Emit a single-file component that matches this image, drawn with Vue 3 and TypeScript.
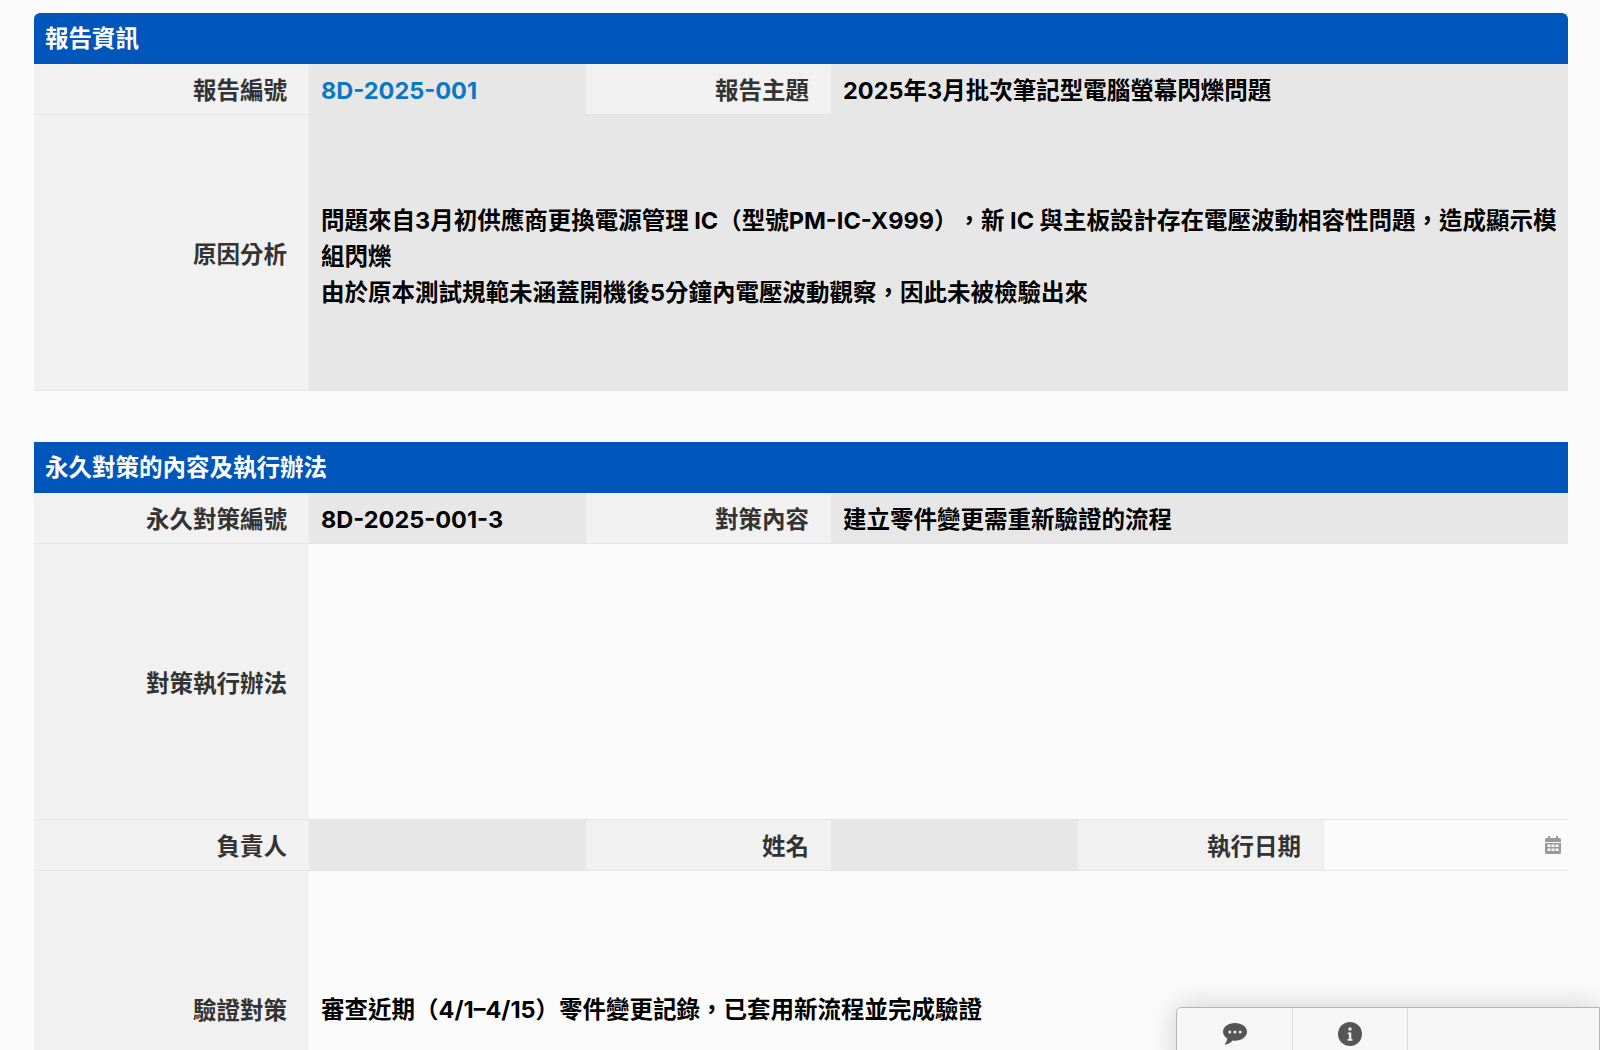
<script setup lang="ts">
interface Cell { label: string; value?: string; kind?: string; span: number; date?: boolean }
const first: Cell[] = [
  { label: '報告編號', value: '8D-2025-001', kind: 'filled link', span: 1 },
  { label: '報告主題', value: '2025年3月批次筆記型電腦螢幕閃爍問題', kind: 'filled', span: 3 },
]
</script>

<template>
  <main class="page">
    <section class="card">
      <h2 class="head round">報告資訊</h2>
      <div class="grid">
        <template v-for="c in first" :key="c.label">
          <div class="label short">{{ c.label }}</div>
          <div class="value short" :class="c.kind" :style="{ gridColumn: 'span ' + (c.span === 3 ? 3 : 1) }">{{ c.value }}</div>
        </template>
        <div class="label tall">原因分析</div>
        <div class="value tall filled wide">
          <p>問題來自3月初供應商更換電源管理 IC（型號PM-IC-X999），新 IC 與主板設計存在電壓波動相容性問題，造成顯示模組閃爍<br />由於原本測試規範未涵蓋開機後5分鐘內電壓波動觀察，因此未被檢驗出來</p>
        </div>
      </div>
    </section>

    <section class="card second">
      <h2 class="head">永久對策的內容及執行辦法</h2>
      <div class="grid">
        <div class="label short">永久對策編號</div>
        <div class="value short filled">8D-2025-001-3</div>
        <div class="label short">對策內容</div>
        <div class="value short filled span3">建立零件變更需重新驗證的流程</div>
        <div class="label tall">對策執行辦法</div>
        <div class="value tall wide"></div>
        <div class="label short">負責人</div>
        <div class="value short filled"></div>
        <div class="label short">姓名</div>
        <div class="value short filled"></div>
        <div class="label short">執行日期</div>
        <div class="value short date">
          <svg class="cal" viewBox="0 0 16 18" width="16" height="18" aria-hidden="true">
            <path fill="#999" d="M3 0h2v2h6V0h2v2h1.500A1.500 1.500 0 0 1 16 3.500V6H0V3.500A1.500 1.500 0 0 1 1.500 2H3zM0 7h16v9.500a1.500 1.500 0 0 1-1.500 1.500h-13A1.500 1.500 0 0 1 0 16.500z"/>
            <path fill="#fbfbfb" d="M2.500 8.500h3v2.500h-3zM6.500 8.500h3v2.500h-3zM10.500 8.500h3v2.500h-3zM2.500 12.500h3V15h-3zM6.500 12.500h3V15h-3zM10.500 12.500h3V15h-3z"/>
          </svg>
        </div>
        <div class="label tall">驗證對策</div>
        <div class="value tall wide">審查近期（4/1–4/15）零件變更記錄，已套用新流程並完成驗證</div>
      </div>
    </section>

    <nav class="dock">
      <button class="dock-btn first-btn" type="button" aria-label="留言">
        <svg class="bubble" viewBox="0 0 24 22" width="24" height="22"><path fill="#555" d="M12 0C5.400 0 0 3.900 0 8.800c0 2.800 1.700 5.200 4.300 6.800-.3 2.300-1.300 4.600-3 6.200 3.300-.4 6.300-1.800 8.200-4.300.8.200 1.700.2 2.500.2 6.600 0 12-3.900 12-8.900S18.600 0 12 0z"/><circle cx="6.800" cy="9" r="1.500" fill="#eee"/><circle cx="12" cy="9" r="1.500" fill="#eee"/><circle cx="17.200" cy="9" r="1.500" fill="#eee"/></svg>
      </button>
      <button class="dock-btn" type="button" aria-label="資訊">
        <svg viewBox="0 0 24 24" width="24" height="24"><circle cx="12" cy="12" r="12" fill="#555"/><circle cx="12" cy="7" r="1.700" fill="#eee"/><path fill="#eee" d="M9.800 10.400h3.500v6.600h1.200v1.800H9.600V17h1.300v-4.800H9.800z"/></svg>
      </button>
      <div class="dock-rest"></div>
    </nav>
  </main>
</template>

<style>
html, body { margin: 0; height: 100%; overflow: hidden; background: #fbfbfb; }
</style>

<style scoped>
.page {
  box-sizing: border-box;
  height: 1050px;
  overflow: hidden;
  padding: 13px 32px 0 34px;
  background: #fbfbfb;
  font-family: Inter, "Noto Sans CJK TC", sans-serif;
  font-size: 23.500px;
  color: #000;
  text-spacing-trim: space-all;
}
.second { margin-top: 51px; }
.head {
  margin: 0;
  height: 51px;
  box-sizing: border-box;
  padding: 0 0 4px 11px;
  display: flex;
  align-items: center;
  background: #0056bb;
  color: #fff;
  font-size: 23.500px;
  font-weight: 700;
}
.round { border-radius: 6px 6px 0 0; }
.grid {
  display: grid;
  grid-template-columns: 275px 277px 245px 247px 245px 245px;
}
.label, .value {
  box-sizing: border-box;
  display: flex;
  align-items: center;
  border-bottom: 1px solid #e4e4e4;
}
.label {
  justify-content: flex-end;
  padding-right: 22px;
  background: #f1f1f1;
  color: #333;
  font-weight: 700;
}
.value {
  padding: 3px 12px 0;
  font-weight: 700;
  line-height: 35.700px;
  min-width: 0;
}
.short { height: 51px; }
.tall { height: 276px; }
.wide { grid-column: span 5; padding-right: 8px; }
.span3 { grid-column: span 3; }
.filled { background: #e7e7e7; }
.link { color: #0a78c4; }
.date { justify-content: flex-end; padding: 0 7px 0 0; border-left: 1px solid #e8e8e8; }
p { margin: 0; padding-top: 6px; }
.dock {
  position: fixed;
  left: 1176px;
  right: 0;
  top: 1007px;
  height: 60px;
  display: flex;
  background: #f6f6f6;
  border: 1px solid #b5b5b5;
  border-radius: 5px 0 0 0;
  box-shadow: 0 0 30px rgba(0, 0, 0, 0.18);
}
.dock-btn {
  box-sizing: border-box;
  width: 115px;
  padding: 14px 0 0;
  display: flex;
  justify-content: center;
  align-items: flex-start;
  background: transparent;
  border: 0;
  border-right: 1px solid #d8d8d8;
}
.first-btn { width: 116px; }
.bubble { margin-top: 1px; }
.dock-rest { flex: 1; }
</style>
